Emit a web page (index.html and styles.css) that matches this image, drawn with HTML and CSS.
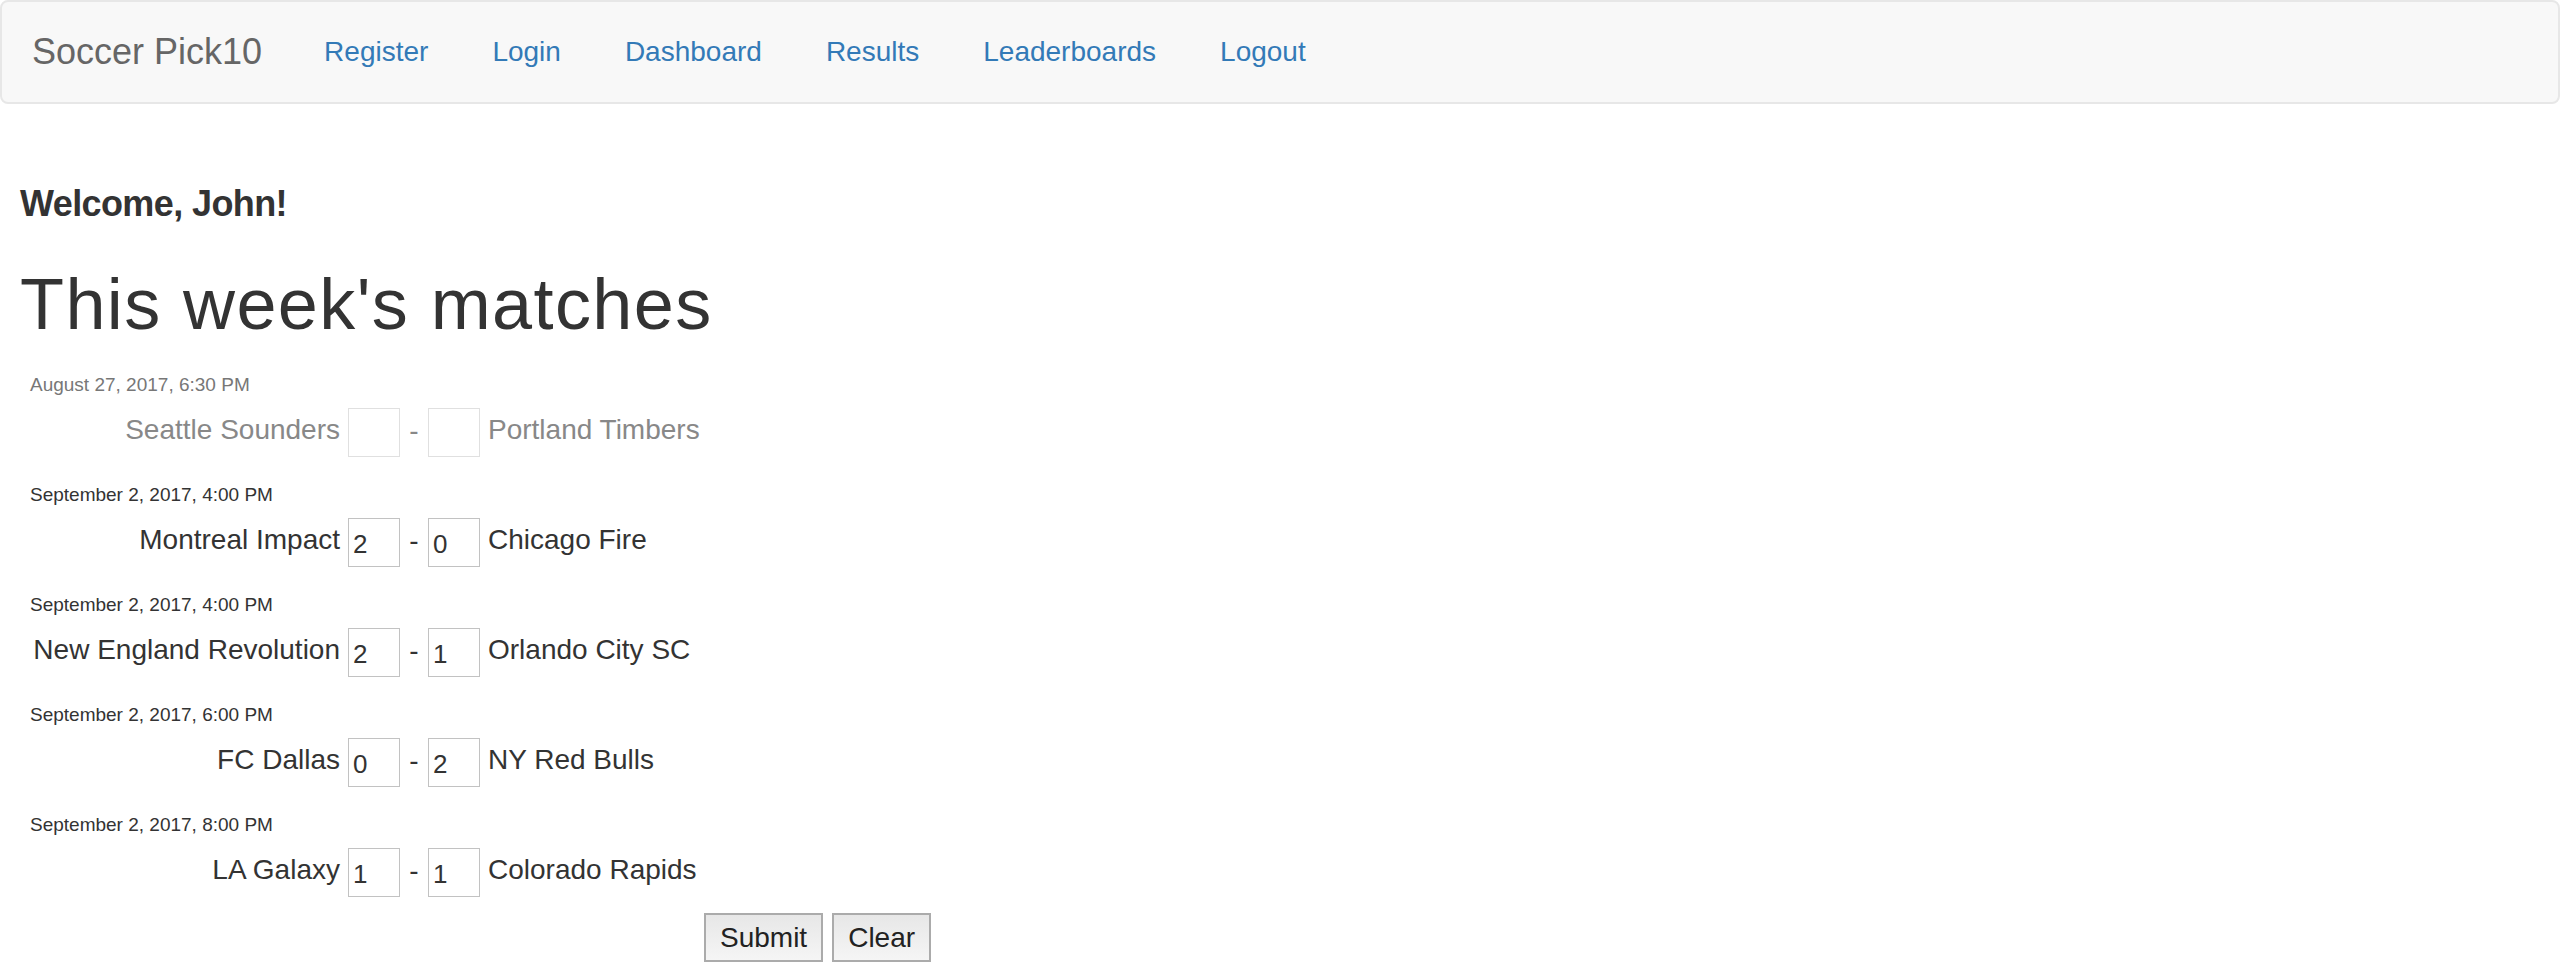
FILE: index.html
```html
<!DOCTYPE html>
<html lang="en">
<head>
<meta charset="utf-8">
<title>Soccer Pick10</title>
<link rel="stylesheet" href="styles.css">
</head>
<body>
<nav class="navbar">
  <a class="brand" href="#">Soccer Pick10</a>
  <ul class="nav">
    <li><a href="#">Register</a></li>
    <li><a href="#">Login</a></li>
    <li><a href="#">Dashboard</a></li>
    <li><a href="#">Results</a></li>
    <li><a href="#">Leaderboards</a></li>
    <li><a href="#">Logout</a></li>
  </ul>
</nav>
<main class="content">
  <h4 class="welcome">Welcome, John!</h4>
  <h1 class="title">This week's matches</h1>
  <form class="matches">
    <div class="match past">
      <div class="match-date">August 27, 2017, 6:30 PM</div>
      <div class="cols match-row">
        <span class="team home">Seattle Sounders</span>
        <input class="score" type="text" value="" disabled>
        <span class="dash">-</span>
        <input class="score" type="text" value="" disabled>
        <span class="team away">Portland Timbers</span>
      </div>
    </div>
    <div class="match">
      <div class="match-date">September 2, 2017, 4:00 PM</div>
      <div class="cols match-row">
        <span class="team home">Montreal Impact</span>
        <input class="score" type="text" value="2">
        <span class="dash">-</span>
        <input class="score" type="text" value="0">
        <span class="team away">Chicago Fire</span>
      </div>
    </div>
    <div class="match">
      <div class="match-date">September 2, 2017, 4:00 PM</div>
      <div class="cols match-row">
        <span class="team home">New England Revolution</span>
        <input class="score" type="text" value="2">
        <span class="dash">-</span>
        <input class="score" type="text" value="1">
        <span class="team away">Orlando City SC</span>
      </div>
    </div>
    <div class="match">
      <div class="match-date">September 2, 2017, 6:00 PM</div>
      <div class="cols match-row">
        <span class="team home">FC Dallas</span>
        <input class="score" type="text" value="0">
        <span class="dash">-</span>
        <input class="score" type="text" value="2">
        <span class="team away">NY Red Bulls</span>
      </div>
    </div>
    <div class="match">
      <div class="match-date">September 2, 2017, 8:00 PM</div>
      <div class="cols match-row">
        <span class="team home">LA Galaxy</span>
        <input class="score" type="text" value="1">
        <span class="dash">-</span>
        <input class="score" type="text" value="1">
        <span class="team away">Colorado Rapids</span>
      </div>
    </div>
    <div class="cols actions">
      <div class="buttons">
        <button type="submit" class="btn">Submit</button>
        <button type="reset" class="btn">Clear</button>
      </div>
    </div>
  </form>
</main>
</body>
</html>
```

FILE: styles.css
```css
html, body {
  margin: 0;
  padding: 0;
  background: #ffffff;
}

body {
  font-family: "Liberation Sans", Arial, Helvetica, sans-serif;
  color: #333333;
}

.navbar {
  display: flex;
  align-items: flex-start;
  height: 104px;
  box-sizing: border-box;
  border: 2px solid #e7e7e7;
  border-radius: 8px;
  background: #f8f8f8;
}

.brand {
  display: block;
  padding: 30px;
  font-size: 36px;
  line-height: 40px;
  color: #666666;
  text-decoration: none;
}

.nav {
  display: flex;
  list-style: none;
  margin: 0;
  padding: 0;
}

.nav a {
  display: block;
  padding: 30px 32px;
  font-size: 28px;
  line-height: 40px;
  color: #337ab7;
  text-decoration: none;
}

.content {
  padding: 0 20px;
}

.welcome {
  margin: 80px 0 0;
  font-size: 36px;
  line-height: 40px;
  font-weight: bold;
  letter-spacing: -0.6px;
  color: #333333;
}

.title {
  margin: 40px 0 0;
  font-size: 72px;
  line-height: 80px;
  font-weight: normal;
  letter-spacing: 1.4px;
  color: #333333;
}

.matches {
  margin: 27px 0 0 10px;
}

.match + .match {
  margin-top: 24px;
}

.match-date {
  font-size: 19px;
  line-height: 27px;
  height: 27px;
  margin-bottom: 10px;
  color: #333333;
}

.cols {
  display: grid;
  grid-template-columns: 310px 52px 12px 52px 208px auto;
  column-gap: 8px;
  align-items: start;
}

.match-row {
  height: 49px;
}

.team {
  font-size: 28px;
  line-height: 43px;
  white-space: nowrap;
  color: #333333;
}

.home {
  text-align: right;
}

.away {
  text-align: left;
}

.dash {
  font-size: 28px;
  line-height: 45px;
  text-align: center;
}

.score {
  width: 52px;
  height: 49px;
  box-sizing: border-box;
  margin: 0;
  padding: 4px 4px 0;
  border: 1px solid #c2c2c2;
  border-radius: 0;
  background: #ffffff;
  font-family: "Liberation Sans", Arial, Helvetica, sans-serif;
  font-size: 26px;
  color: #333333;
  outline: none;
}

.match.past .match-date {
  color: #777777;
}

.match.past .team,
.match.past .dash {
  color: #888888;
}

.match.past .score {
  border-color: #e0e0e0;
}

.actions {
  margin-top: 16px;
}

.buttons {
  grid-column: 6;
  display: flex;
  gap: 9px;
}

.btn {
  height: 49px;
  box-sizing: border-box;
  margin: 0;
  padding: 0 14px;
  border: 2px solid #ababab;
  border-radius: 0;
  background: linear-gradient(#e7e7e7, #f5f5f5);
  font-family: "Liberation Sans", Arial, Helvetica, sans-serif;
  font-size: 28px;
  color: #222222;
}
```
